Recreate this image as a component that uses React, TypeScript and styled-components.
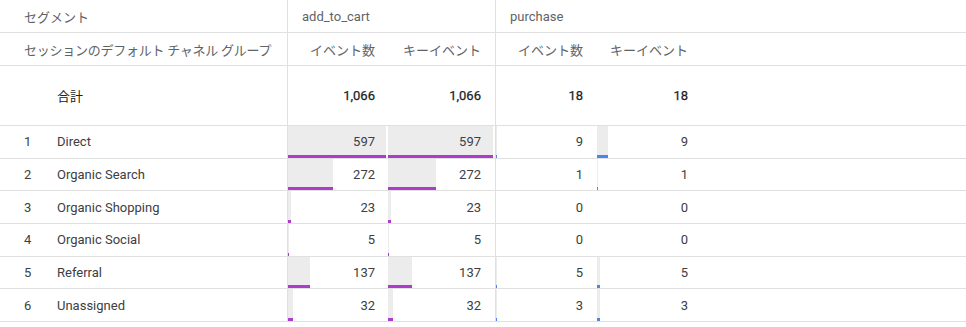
import styled, { createGlobalStyle } from "styled-components";

const GlobalStyle = createGlobalStyle`
  body {
    margin: 0;
    background: #ffffff;
    font-family: Roboto, "Noto Sans CJK JP", "Noto Sans", sans-serif;
    -webkit-font-smoothing: antialiased;
  }
`;

const COLS = "287px 101px 107px 102px 104px 1fr";
const LINE = "#e0e0e0";

type Metric = { value: number; bar: number; color: string };

type RowData = {
  rank: number;
  label: string;
  cells: Metric[];
};

const PURPLE = "#ad3bcb";
const BLUE = "#4a86ee";

// bar widths in px, scaled the way the report draws them
const rows: RowData[] = [
  {
    rank: 1,
    label: "Direct",
    cells: [
      { value: 597, bar: 98, color: PURPLE },
      { value: 597, bar: 105, color: PURPLE },
      { value: 9, bar: 1, color: BLUE },
      { value: 9, bar: 11, color: BLUE },
    ],
  },
  {
    rank: 2,
    label: "Organic Search",
    cells: [
      { value: 272, bar: 45, color: PURPLE },
      { value: 272, bar: 48, color: PURPLE },
      { value: 1, bar: 0, color: BLUE },
      { value: 1, bar: 1, color: BLUE },
    ],
  },
  {
    rank: 3,
    label: "Organic Shopping",
    cells: [
      { value: 23, bar: 3, color: PURPLE },
      { value: 23, bar: 3, color: PURPLE },
      { value: 0, bar: 0, color: BLUE },
      { value: 0, bar: 0, color: BLUE },
    ],
  },
  {
    rank: 4,
    label: "Organic Social",
    cells: [
      { value: 5, bar: 1, color: PURPLE },
      { value: 5, bar: 1, color: PURPLE },
      { value: 0, bar: 0, color: BLUE },
      { value: 0, bar: 0, color: BLUE },
    ],
  },
  {
    rank: 5,
    label: "Referral",
    cells: [
      { value: 137, bar: 22, color: PURPLE },
      { value: 137, bar: 24, color: PURPLE },
      { value: 5, bar: 1, color: BLUE },
      { value: 5, bar: 3, color: BLUE },
    ],
  },
  {
    rank: 6,
    label: "Unassigned",
    cells: [
      { value: 32, bar: 5, color: PURPLE },
      { value: 32, bar: 5, color: PURPLE },
      { value: 3, bar: 1, color: BLUE },
      { value: 3, bar: 3, color: BLUE },
    ],
  },
];

const Table = styled.div`
  width: 966px;
  font-size: 13px;
  color: #3c4043;
`;

const Row = styled.div<{ $h: number }>`
  display: grid;
  grid-template-columns: ${COLS};
  height: ${(p) => p.$h}px;
  border-bottom: 1px solid ${LINE};
`;

const HeadCell = styled.div<{ $span?: number; $divider?: boolean }>`
  grid-column: span ${(p) => p.$span ?? 1};
  display: flex;
  align-items: center;
  padding-left: ${(p) => (p.$divider ? 14 : 24)}px;
  color: #5f6368;
  white-space: nowrap;
  border-left: ${(p) => (p.$divider ? `1px solid ${LINE}` : "none")};
`;

const JpText = styled.span`
  letter-spacing: -0.25px;
`;

const MetricHead = styled.div<{ $divider?: boolean; $pad?: number }>`
  display: flex;
  align-items: center;
  justify-content: flex-end;
  padding-right: ${(p) => p.$pad ?? 13}px;
  color: #5f6368;
  white-space: nowrap;
  border-left: ${(p) => (p.$divider ? `1px solid ${LINE}` : "none")};
`;

const DimCell = styled.div<{ $total?: boolean }>`
  display: flex;
  align-items: center;
  padding-left: 24px;
  color: ${(p) => (p.$total ? "#202124" : "#3c4043")};
  white-space: nowrap;
`;

const Rank = styled.span`
  width: 33px;
`;

const TotalLabel = styled.span`
  padding-left: 33px;
`;

const Value = styled.div<{ $divider?: boolean; $pad?: number; $total?: boolean }>`
  position: relative;
  display: flex;
  align-items: center;
  justify-content: flex-end;
  padding-right: ${(p) => p.$pad ?? 13}px;
  color: ${(p) => (p.$total ? "#202124" : "#3c4043")};
  border-left: ${(p) => (p.$divider ? `1px solid ${LINE}` : "none")};
`;

const Bar = styled.div<{ $color: string }>`
  position: absolute;
  left: 0;
  top: 0;
  bottom: 0;
  background: #ececec;
  border-bottom: 3px solid ${(p) => p.$color};
  box-sizing: border-box;
`;

const Num = styled.span<{ $total?: boolean }>`
  position: relative;
  -webkit-text-stroke: ${(p) => (p.$total ? "0.25px #202124" : "0")};
`;

const Filler = styled.div``;

// per column: divider on the left, right padding
const colMeta = [
  { divider: true, pad: 13 },
  { divider: false, pad: 14 },
  { divider: true, pad: 14 },
  { divider: false, pad: 13 },
];

export default function App() {
  return (
    <>
      <GlobalStyle />
      <Table>
        <Row $h={32}>
          <HeadCell>セグメント</HeadCell>
          <HeadCell $span={2} $divider>
            add_to_cart
          </HeadCell>
          <HeadCell $span={3} $divider>
            purchase
          </HeadCell>
        </Row>
        <Row $h={32}>
          <HeadCell>
            <JpText>セッションのデフォルト チャネル グループ</JpText>
          </HeadCell>
          {["イベント数", "キーイベント", "イベント数", "キーイベント"].map((t, i) => (
            <MetricHead key={i} $divider={colMeta[i].divider} $pad={colMeta[i].pad}>
              {t}
            </MetricHead>
          ))}
          <Filler />
        </Row>
        <Row $h={59}>
          <DimCell $total>
            <TotalLabel>合計</TotalLabel>
          </DimCell>
          {["1,066", "1,066", "18", "18"].map((t, i) => (
            <Value key={i} $total $divider={colMeta[i].divider} $pad={colMeta[i].pad}>
              <Num $total>{t}</Num>
            </Value>
          ))}
          <Filler />
        </Row>
        {rows.map((r) => (
          <Row $h={31.67} key={r.rank}>
            <DimCell>
              <Rank>{r.rank}</Rank>
              {r.label}
            </DimCell>
            {r.cells.map((c, i) => (
              <Value key={i} $divider={colMeta[i].divider} $pad={colMeta[i].pad}>
                {c.bar > 0 && <Bar $color={c.color} style={{ width: c.bar }} />}
                <Num>{c.value}</Num>
              </Value>
            ))}
            <Filler />
          </Row>
        ))}
      </Table>
    </>
  );
}
